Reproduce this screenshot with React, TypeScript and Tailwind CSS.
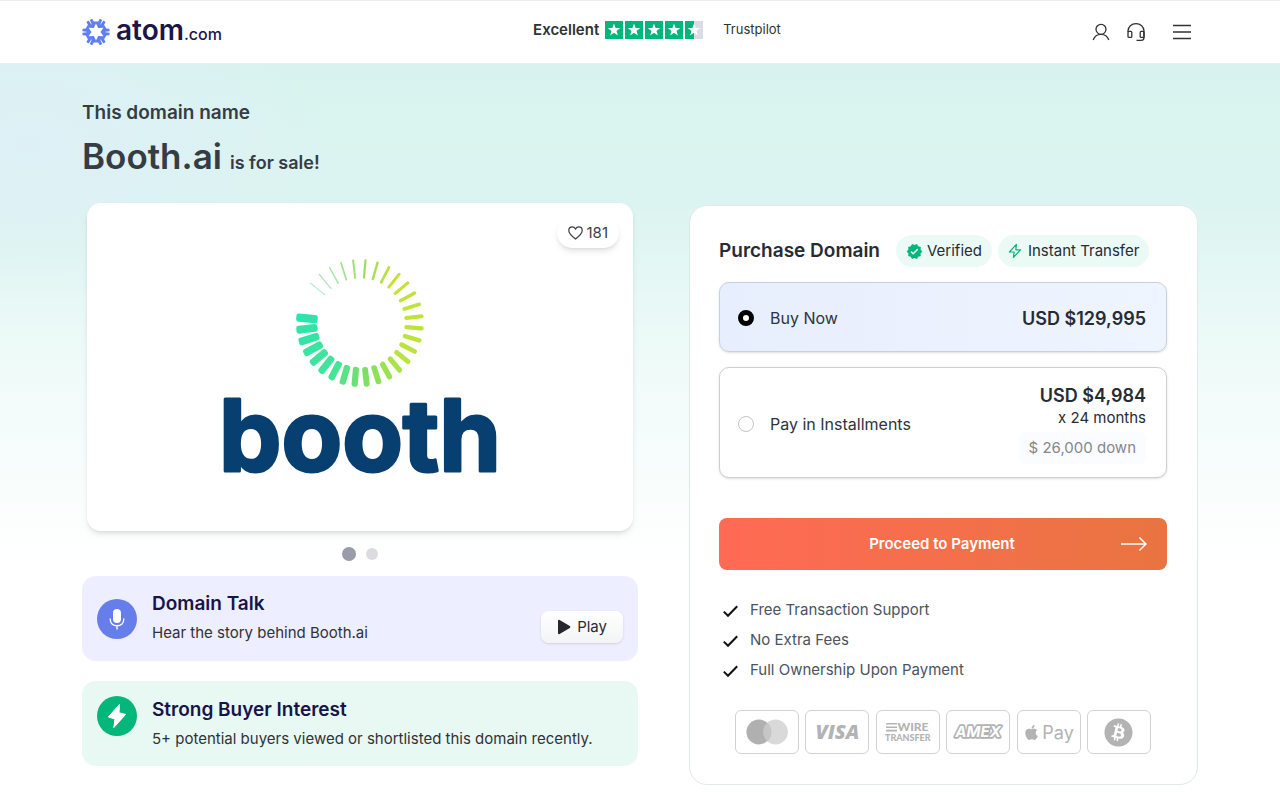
import { useState } from "react";
import { FaApple, FaBitcoin } from "react-icons/fa";
import { MdVerified } from "react-icons/md";

const RING_BARS = 30;
const RING_STOPS = [
  [0, 45, 228, 172],
  [6, 70, 228, 150],
  [9, 125, 224, 100],
  [13, 185, 228, 62],
  [21, 196, 226, 52],
  [24, 160, 220, 95],
  [29, 170, 232, 215],
];

const perks = [
  "Free Transaction Support",
  "No Extra Fees",
  "Full Ownership Upon Payment",
];

function ringColor(i: number) {
  const next = RING_STOPS.findIndex((s) => s[0] >= i);
  if (next <= 0) return "rgb(45 228 172)";
  const a = RING_STOPS[next - 1];
  const b = RING_STOPS[next];
  const t = (i - a[0]) / (b[0] - a[0]);
  const c = [1, 2, 3].map((k) => Math.round(a[k] + (b[k] - a[k]) * t));
  return `rgb(${c[0]} ${c[1]} ${c[2]})`;
}

function AtomMark() {
  return (
    <svg width="28" height="28" viewBox="-14 -14 28 28" aria-hidden="true">
      {[0, 60, 120, 180, 240, 300].map((deg) => (
        <path
          key={deg}
          d="M-6.2 -12.1 L-3.8 -13.3 L-2.2 -10.6 H2.2 L3.8 -13.3 L6.2 -12.1 L4.6 -8.6 L3.6 -4.6 L2.2 -4 L0 -8.6 L-2.2 -4 L-3.6 -4.6 L-4.6 -8.6 Z"
          fill="#5f7fee"
          transform={`rotate(${deg})`}
        />
      ))}
    </svg>
  );
}

function BoothLogo() {
  return (
    <svg
      className="w-full max-w-[300px]"
      viewBox="0 0 300 260"
      role="img"
      aria-label="booth"
    >
      <g transform="translate(150 86)">
        {Array.from({ length: RING_BARS }, (_, i) => {
          const w = 8.2 - i * 0.25;
          const inner = 42.5 + Math.min(i, 10) * 0.2;
          return (
            <rect
              key={i}
              x={inner}
              y={-w / 2}
              width={64 - inner}
              height={w}
              rx={Math.min(w / 2, 2.4)}
              fill={ringColor(i)}
              transform={`rotate(${185 - i * 11.25})`}
            />
          );
        })}
      </g>
      <text
        x="150"
        y="234"
        textAnchor="middle"
        stroke="#073f70"
        strokeWidth="3"
        strokeLinejoin="round"
        className="fill-[#073f70] font-['Inter',sans-serif] text-[99px] font-bold"
      >
        booth
      </text>
    </svg>
  );
}

function Star({ half = false }: { half?: boolean }) {
  return (
    <svg width="18" height="18" viewBox="0 0 18 18" aria-hidden="true">
      <path d="M0 0H18V18H0Z" fill={half ? "#dcdce6" : "#00b67a"} />
      {half && <path d="M0 0H9V18H0Z" fill="#00b67a" />}
      <path
        d="M9 2.6 L10.6 7 L15.2 7.1 L11.5 9.9 L12.9 14.4 L9 11.7 L5.1 14.4 L6.5 9.9 L2.8 7.1 L7.4 7 Z"
        fill="#fff"
      />
    </svg>
  );
}

function Header() {
  return (
    <header className="border-y border-[#ececee] bg-white">
      <div className="mx-auto flex h-[62px] max-w-[1140px] items-center justify-between px-3">
        <a href="#" className="flex items-center gap-1.5 text-[#1b1548]">
          <AtomMark />
          <span className="leading-8">
            <span className="text-[28px] font-semibold">atom</span>
            <span className="text-[16px] font-medium">.com</span>
          </span>
        </a>

        <a href="#" className="flex items-center pb-1 text-[#2f3137]">
          <span className="text-[15px] font-semibold">Excellent</span>
          <span className="ml-1.5 flex gap-0.5">
            <Star />
            <Star />
            <Star />
            <Star />
            <Star half />
          </span>
          <span className="ml-5 text-[13px]">Trustpilot</span>
        </a>

        <nav className="flex items-center gap-4 pr-1.5 text-[#303236]">
          <button type="button" aria-label="Account">
            <svg width="18" height="18" viewBox="0 0 18 18" fill="none" stroke="currentColor" strokeWidth="1.3">
              <circle cx="9" cy="6.3" r="5" />
              <path d="M1.2 17 C2.4 13.4 5.2 11.3 9 11.3 C12.8 11.3 15.6 13.4 16.8 17" />
            </svg>
          </button>
          <button type="button" aria-label="Support">
            <svg width="20" height="20" viewBox="0 0 20 20" fill="none" stroke="currentColor" strokeWidth="1.3">
              <path d="M2 10 V9 C2 4.6 5.6 1.6 10 1.6 C14.4 1.6 18 4.6 18 9 V15.5 C18 17.5 16.6 18.4 15 18.4 H10.5" />
              <rect x="2" y="9.4" width="3.8" height="6" rx="1" />
              <rect x="14.2" y="9.4" width="3.8" height="6" rx="1" />
            </svg>
          </button>
          <button type="button" aria-label="Menu" className="ml-2.5">
            <svg width="20" height="20" viewBox="0 0 20 20" stroke="currentColor" strokeWidth="1.5">
              <path d="M1 3.5H19M1 10H19M1 16.5H19" />
            </svg>
          </button>
        </nav>
      </div>
    </header>
  );
}

function PaymentMethods() {
  const box =
    "flex h-11 w-16 items-center justify-center rounded-md border border-[#d2d2d4] bg-white text-[#b3b3b3]";

  return (
    <ul className="mt-[25px] flex justify-between px-4">
      <li className={box}>
        <svg width="42" height="26" viewBox="0 0 42 26" role="img" aria-label="Mastercard">
          <circle cx="29.5" cy="13" r="12.4" fill="#d9d9d9" />
          <circle cx="12.8" cy="13" r="12.4" fill="#b0b0b0" />
          <path d="M21.2 3.8 A12.4 12.4 0 0 1 21.2 22.2 A12.4 12.4 0 0 1 21.2 3.8Z" fill="#c6c6c6" />
        </svg>
      </li>
      <li className={box}>
        <span className="font-['Open_Sans',sans-serif] text-[20px] font-extrabold italic">VISA</span>
      </li>
      <li className={box}>
        <svg width="48" height="28" viewBox="0 0 48 28" fill="currentColor" role="img" aria-label="Wire transfer">
          <path d="M2 5H13V6.6H2ZM2 8.4H13V10H2ZM2 11.8H13V13.4H2Z" />
          <text x="13.5" y="13.4" className="font-['Lato',sans-serif] text-[12px] font-black">WIRE</text>
          <text x="1" y="23" className="font-['Lato',sans-serif] text-[9px] font-black">TRANSFER</text>
        </svg>
      </li>
      <li className={box}>
        <svg width="54" height="24" viewBox="0 0 54 24" role="img" aria-label="Amex">
          <text
            x="27"
            y="17"
            textAnchor="middle"
            fill="#fff"
            stroke="#b3b3b3"
            strokeWidth="3.4"
            strokeLinejoin="round"
            paintOrder="stroke"
            className="font-['Inter',sans-serif] text-[15px] font-bold italic"
          >
            AMEX
          </text>
        </svg>
      </li>
      <li className={`${box} gap-0.5`}>
        <FaApple size={17} />
        <span className="text-[18px]">Pay</span>
      </li>
      <li className={box}>
        <FaBitcoin size={29} title="Bitcoin" />
      </li>
    </ul>
  );
}

function PurchaseCard() {
  const [plan, setPlan] = useState("buy");

  const radio =
    "size-4 shrink-0 appearance-none rounded-full border border-[#c4c4c8] bg-white checked:border-[5px] checked:border-black";

  return (
    <section className="mt-0.5 rounded-[18px] border border-[#e2e8e8] bg-white pt-[29px] pr-[30px] pb-[30px] pl-[29px]">
      <div className="flex items-center">
        <h2 className="text-[19px] font-semibold text-[#272b34]">Purchase Domain</h2>
        <span className="ml-4 flex h-8 items-center gap-1 rounded-full bg-[#ebfaf5] px-2.5 text-[15px] text-[#272b34]">
          <MdVerified size={17} className="text-[#00b67a]" />
          Verified
        </span>
        <span className="ml-1.5 flex h-8 items-center gap-1.5 rounded-full bg-[#ebfaf5] px-2.5 text-[15px] text-[#272b34]">
          <svg width="14" height="16" viewBox="0 0 14 16" fill="none" stroke="#00b67a" strokeWidth="1.2" strokeLinejoin="round">
            <path d="M8.4 1.4 L1.4 9 H6.2 L5.4 14.4 L12.6 6.8 H7.8 Z" />
          </svg>
          Instant Transfer
        </span>
      </div>

      <label className="mt-[15px] flex h-[70px] items-center rounded-[10px] border border-[#c8cfe0] bg-linear-to-r from-[#e7eefd] to-[#eff5fe] pt-0.5 pr-5 pl-[18px] shadow-sm">
        <input
          type="radio"
          name="plan"
          className={radio}
          checked={plan === "buy"}
          onChange={() => setPlan("buy")}
        />
        <span className="ml-4 flex-1 text-[16px] text-[#2f333d]">Buy Now</span>
        <span className="text-[18px] font-semibold text-[#272b34]">USD $129,995</span>
      </label>

      <label className="mt-[15px] flex h-[111px] items-center rounded-[10px] border border-[#cfcfd2] bg-white pt-0.5 pr-5 pl-[18px] shadow-sm">
        <input
          type="radio"
          name="plan"
          className={radio}
          checked={plan === "installments"}
          onChange={() => setPlan("installments")}
        />
        <span className="ml-4 flex-1 text-[16px] text-[#2f333d]">Pay in Installments</span>
        <span className="flex flex-col items-end text-[15px] text-[#272b34]">
          <span className="text-[18px] leading-6 font-semibold">USD $4,984</span>
          <span className="leading-5">x 24 months</span>
          <span className="mt-1 rounded-md bg-[#fbfcff] px-2.5 leading-8 text-[#85878c]">
            $ 26,000 down
          </span>
        </span>
      </label>

      <button
        type="button"
        className="mt-10 flex h-[52px] w-full items-center rounded-lg bg-linear-to-r from-[#ff6a55] to-[#e97440] px-5 text-white"
      >
        <span className="flex-1 pl-6 text-[15px] font-semibold">Proceed to Payment</span>
        <svg width="26" height="16" viewBox="0 0 26 16" fill="none" stroke="currentColor" strokeWidth="1.4">
          <path d="M0 8H25M18.4 1.4L25 8L18.4 14.6" />
        </svg>
      </button>

      <ul className="mt-[25px] pl-1 text-[15px] leading-[30px] text-[#4a5361]">
        {perks.map((perk) => (
          <li key={perk} className="flex items-center gap-3">
            <svg width="15" height="15" viewBox="0 0 15 15" fill="none" stroke="#111" strokeWidth="2">
              <path d="M0.8 8.6 L5 12.8 L14.2 3.2" />
            </svg>
            {perk}
          </li>
        ))}
      </ul>

      <PaymentMethods />
    </section>
  );
}

function Showcase() {
  return (
    <section>
      <div className="relative mx-[5px] flex h-[328px] items-center justify-center rounded-[14px] bg-white shadow-md">
        <BoothLogo />
        <button
          type="button"
          aria-label="Add to favourites"
          className="absolute top-[15px] right-3.5 flex h-[30px] items-center gap-1 rounded-full bg-white px-[11px] text-[15px] text-[#3c3e44] shadow-md"
        >
          <svg width="15" height="14" viewBox="0 0 15 14" fill="none" stroke="currentColor" strokeWidth="1.2">
            <path d="M7.5 12.9 C3 9.6 0.8 7.2 0.8 4.5 C0.8 2.4 2.3 0.9 4.2 0.9 C5.6 0.9 6.8 1.7 7.5 3 C8.2 1.7 9.4 0.9 10.8 0.9 C12.7 0.9 14.2 2.4 14.2 4.5 C14.2 7.2 12 9.6 7.5 12.9 Z" />
          </svg>
          181
        </button>
      </div>

      <div className="flex h-[45px] items-center justify-center gap-2.5">
        <button type="button" aria-label="Slide 1" className="size-3.5 rounded-full bg-[#999ca9]" />
        <button type="button" aria-label="Slide 2" className="size-3 rounded-full bg-[#dcdce0]" />
      </div>

      <div className="flex items-center rounded-[14px] bg-[#edeeff] px-[15px] py-3.5">
        <span className="flex size-10 shrink-0 items-center justify-center rounded-full bg-[#667eea]">
          <svg width="18" height="24" viewBox="0 0 18 24" fill="none" stroke="#fff" strokeWidth="1.4" strokeLinecap="round">
            <rect x="5" y="2" width="8" height="14" rx="4" fill="#fff" stroke="none" />
            <path d="M2.2 12 C2.2 16.2 5 18.8 9 18.8 C13 18.8 15.8 16.2 15.8 12 M9 18.8 V22" />
          </svg>
        </span>
        <div className="ml-[15px] flex-1">
          <h3 className="text-[19px] leading-7 font-semibold text-[#17144a]">Domain Talk</h3>
          <p className="text-[15px] leading-[29px] text-[#303236]">
            Hear the story behind Booth.ai
          </p>
        </div>
        <button
          type="button"
          className="mb-1 flex h-8 items-center gap-1.5 self-end rounded-lg bg-linear-to-b from-white to-[#f3f4f5] px-4 text-[15px] text-[#272b34] shadow-sm"
        >
          <svg width="14" height="16" viewBox="0 0 14 16" fill="#25272c">
            <path d="M1 1.8 C1 0.9 1.8 0.5 2.6 1 L12.8 7.1 C13.5 7.6 13.5 8.4 12.8 8.9 L2.6 15 C1.8 15.5 1 15.1 1 14.2 Z" />
          </svg>
          Play
        </button>
      </div>

      <div className="mt-5 flex items-start rounded-[14px] bg-[#e8f9f3] px-[15px] pt-[15px] pb-[13px]">
        <span className="flex size-10 shrink-0 items-center justify-center rounded-full bg-[#03b77b]">
          <svg width="20" height="26" viewBox="0 0 20 26" fill="#fff" stroke="#fff" strokeLinejoin="round">
            <path d="M12.6 1.2 L1.4 14 L8 16 L6.8 24.6 L18.6 11.4 L12 9.8 Z" />
          </svg>
        </span>
        <div className="ml-[15px] flex-1">
          <h3 className="text-[19px] leading-7 font-semibold text-[#17144a]">
            Strong Buyer Interest
          </h3>
          <p className="text-[15px] leading-[29px] text-[#303236]">
            5+ potential buyers viewed or shortlisted this domain recently.
          </p>
        </div>
      </div>
    </section>
  );
}

export default function App() {
  return (
    <div className="min-h-screen bg-white font-['Inter',sans-serif]">
      <Header />
      <main className="bg-[radial-gradient(ellipse_300px_160px_at_30px_80px,#def0f6_0%,transparent_100%),linear-gradient(to_bottom,#d8f3ef_0px,#dcf4f1_140px,#f0fbf9_310px,#ffffff_500px)]">
        <div className="mx-auto max-w-[1140px] px-3 pt-[35px] pb-[15px]">
          <h1 className="font-semibold text-[#363c44]">
            <span className="block text-[19px] leading-7">This domain name</span>
            <span className="mt-[5px] flex h-12 items-baseline gap-2 text-[18px] leading-[48px]">
              <span className="text-[35px]">Booth.ai</span>
              <span>is for sale!</span>
            </span>
          </h1>
          <div className="mt-[23px] grid grid-cols-[556fr_509fr] gap-[51px]">
            <Showcase />
            <PurchaseCard />
          </div>
        </div>
      </main>
    </div>
  );
}
